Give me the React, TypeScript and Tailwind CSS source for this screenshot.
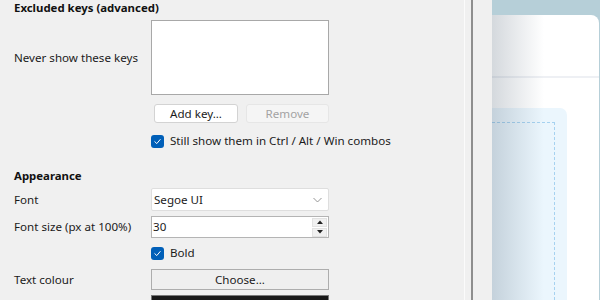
import React from 'react';

const font = { fontFamily: '"Noto Sans", "Liberation Sans", sans-serif' };

const Check: React.FC<{ label: string }> = ({ label }) => (
  <div className="flex items-center h-[14px] whitespace-nowrap">
    <span className="w-[13px] h-[13px] rounded-[3px] bg-[#005fb8] flex items-center justify-center shrink-0">
      <svg width="9" height="9" viewBox="0 0 10 10" fill="none">
        <path d="M2 5.2 L4.2 7.3 L8 2.8" stroke="white" strokeWidth="1.1" strokeLinecap="round" strokeLinejoin="round" />
      </svg>
    </span>
    <span className="ml-[6px] text-[#1b1b1b]">{label}</span>
  </div>
);

const Row: React.FC<{ label?: string; className?: string; children: React.ReactNode }> = ({ label, className = '', children }) => (
  <div className={`flex items-center shrink-0 ${className}`}>
    <div className="w-[137px] shrink-0 text-[#1b1b1b] whitespace-nowrap">{label}</div>
    <div className="w-[178px] h-full flex items-center">{children}</div>
  </div>
);

export default function App() {
  return (
    <div className="w-[600px] h-[300px] flex overflow-hidden bg-[#f0f0f0] text-[11.6px] leading-none" style={font}>
      {/* settings panel */}
      <div className="w-[464px] shrink-0 pl-[14px] flex flex-col">
        <div className="h-[15px] shrink-0 flex items-center font-bold text-[#111] text-[11.4px]">Excluded keys (advanced)</div>

        <Row label="Never show these keys" className="mt-[5px] h-[75px]">
          <div className="w-full h-full bg-white border border-[#a8a8a8]" />
        </Row>

        <Row className="mt-[9px] h-[19px]">
          <div className="flex gap-[8px] pl-[3px]">
            <button className="w-[84px] h-[19px] bg-white border border-[#d3d3d3] rounded-[3px] text-[#1b1b1b] leading-none">Add key...</button>
            <button className="w-[83px] h-[19px] bg-[#f5f5f5] border border-[#e6e6e6] rounded-[3px] text-[#a3a3a3] leading-none">Remove</button>
          </div>
        </Row>

        <Row className="mt-[11px] h-[14px]">
          <Check label="Still show them in Ctrl / Alt / Win combos" />
        </Row>

        <div className="mt-[20px] h-[16px] shrink-0 flex items-center font-bold text-[#111] text-[11.4px]">Appearance</div>

        <Row label="Font" className="mt-[4px] h-[23px]">
          <div className="w-full h-full bg-white border border-[#dedede] rounded-[2px] flex items-center justify-between pl-[2px] pr-[6px] text-[#1b1b1b]">
            <span>Segoe UI</span>
            <svg width="9" height="6" viewBox="0 0 9 6" fill="none">
              <path d="M0.5 1 L4.5 5 L8.5 1" stroke="#8a8a8a" strokeWidth="0.9" />
            </svg>
          </div>
        </Row>

        <Row label="Font size (px at 100%)" className="mt-[5px] h-[22px]">
          <div className="w-full h-full bg-white border border-[#b4b4b4] flex items-center justify-between text-[#1b1b1b]">
            <span className="pl-[1px]">30</span>
            <div className="flex flex-col gap-[1px] pr-[1px]">
              <span className="w-[15px] h-[9px] bg-[#f0f0f0] border border-[#e2e2e2] flex items-center justify-center">
                <svg width="6" height="4" viewBox="0 0 6 4"><path d="M0 4 L3 0.5 L6 4 Z" fill="#222" /></svg>
              </span>
              <span className="w-[15px] h-[9px] bg-[#f0f0f0] border border-[#e2e2e2] flex items-center justify-center">
                <svg width="6" height="4" viewBox="0 0 6 4"><path d="M0 0 L3 3.5 L6 0 Z" fill="#222" /></svg>
              </span>
            </div>
          </div>
        </Row>

        <Row className="mt-[8px] h-[14px]">
          <Check label="Bold" />
        </Row>

        <Row label="Text colour" className="mt-[9px] h-[21px]">
          <button className="w-full h-full bg-[#efefef] border border-[#adadad] text-[#1b1b1b] leading-none">Choose...</button>
        </Row>

        <Row className="mt-[5px] h-[20px]">
          <div className="w-full h-full bg-[#1a1a1a] border border-[#7a7a7a]" />
        </Row>
      </div>

      {/* splitter */}
      <div className="w-[1px] shrink-0 bg-[#fbfbfb]" />
      <div className="w-[6px] shrink-0" />
      <div className="w-[2px] shrink-0 bg-[#8e8e8e]" />
      <div className="w-[19px] shrink-0" />

      {/* preview */}
      <div className="flex-1 bg-[#b6cfd8] pt-[15px] pr-[1px] flex flex-col">
        <div className="relative flex-1 bg-white rounded-tr-[8px] overflow-hidden flex flex-col">
          <div className="h-[61px] shrink-0" />
          <div className="h-[2px] shrink-0 bg-[#eef0f4]" />
          <div className="pt-[30px] flex-1 flex flex-col">
            <div className="w-[75px] flex-1 bg-[#ebf6fd] rounded-tr-[7px] pt-[14px] pr-[12px] flex flex-col">
              <div className="flex-1 border-t border-r border-dashed border-[#a6d2f0]" />
            </div>
          </div>
          <div className="absolute inset-y-0 left-0 w-[52px] bg-gradient-to-r from-[rgba(60,80,100,0.22)] to-transparent" />
        </div>
      </div>
    </div>
  );
}
